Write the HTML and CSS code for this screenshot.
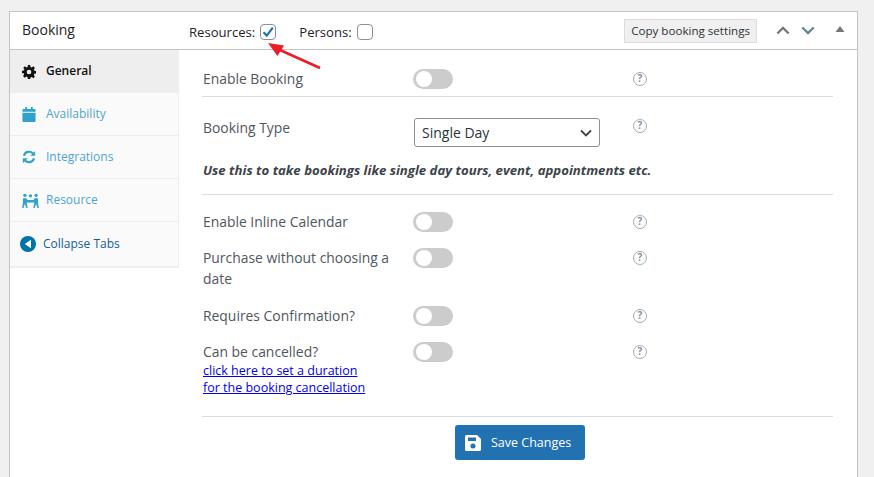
FILE: index.html
```html
<!DOCTYPE html>
<html lang="en">
<head>
<meta charset="utf-8">
<title>Booking</title>
<link rel="stylesheet" href="styles.css">
</head>
<body>
<div class="panel">
  <header class="head">
    <h2 class="title">Booking</h2>
    <label class="opt opt-res">Resources: <span class="check"><svg viewBox="0 0 16 16" width="16" height="16"><path d="M3.500 8.200 6.800 11.600 12.800 3.600" fill="none" stroke="#2271b1" stroke-width="2.200"/></svg></span></label>
    <label class="opt opt-per">Persons: <span class="check"></span></label>
    <span class="copy">Copy booking settings</span>
    <svg class="hbtn hup" viewBox="0 0 16 10" width="14" height="9"><path d="M1.500 8.500 8 2l6.500 6.500" fill="none" stroke="#72777c" stroke-width="2.500"/></svg>
    <svg class="hbtn hdown" viewBox="0 0 16 10" width="14" height="9"><path d="M1.500 1.500 8 8l6.500-6.500" fill="none" stroke="#5f8296" stroke-width="2.500"/></svg>
    <svg class="hbtn htog" viewBox="0 0 10 6" width="10" height="6"><path d="M5 0l4.500 6H.5z" fill="#72777c"/></svg>
  </header>
  <svg class="arrow" viewBox="0 0 64 32" width="64" height="32"><path d="M60 28 20 10" stroke="#ee1c25" stroke-width="2.600" fill="none"/><path d="M8 3 24 5.500 17.500 16z" fill="#ee1c25"/></svg>
  <div class="body">
    <nav class="tabs">
      <a class="tab active"><svg class="ti" viewBox="0 0 24 24" width="14" height="14"><path fill="#111" fill-rule="evenodd" d="M10 0h4l.6 3.300 2 .8L19.400 2.200l2.800 2.800-1.900 2.800.8 2 3.300.6v4l-3.300.6-.8 2 1.900 2.800-2.800 2.800-2.800-1.900-2 .8L14 24h-4l-.6-3.300-2-.8-2.800 1.900-2.800-2.800 1.900-2.800-.8-2L0 14v-4l3.300-.6.8-2L2.200 5 5 2.200l2.800 1.900 2-.8zM12 8a4 4 0 1 0 0 8 4 4 0 0 0 0-8z"/></svg><span>General</span></a>
      <a class="tab"><svg class="ti" viewBox="0 0 14 16" width="13" height="15"><path fill="#2ea2cc" d="M3 0h2v2h4V0h2v2h2a1 1 0 0 1 1 1v2H0V3a1 1 0 0 1 1-1h2zM0 6h14v9a1 1 0 0 1-1 1H1a1 1 0 0 1-1-1z"/></svg><span>Availability</span></a>
      <a class="tab"><svg class="ti" viewBox="0 0 16 16" width="15" height="14"><path fill="none" stroke="#2ea2cc" stroke-width="2.400" d="M2.200 6.500A6 6 0 0 1 12.500 4M13.800 9.500A6 6 0 0 1 3.500 12"/><path fill="#2ea2cc" d="M15 1v5.500H9.500zM1 15V9.500h5.500z"/></svg><span>Integrations</span></a>
      <a class="tab"><svg class="ti ti-w" viewBox="0 0 18 16" width="17" height="15"><g fill="#2ea2cc"><circle cx="3" cy="2.500" r="1.800"/><circle cx="9" cy="3" r="1.800"/><circle cx="15" cy="2.500" r="1.800"/><path d="M1 5.500h3.500L6 7.500h6l1.500-2h3.500v5l1 5.500h-1.500L15 11.500 13.500 16H12l1-5V10H5v1l1 5H4.500L3 11.500 1.500 16H0l1-5.500zM6 8h6v2H6z"/></g></svg><span>Resource</span></a>
      <a class="tab collapse"><svg class="tc" viewBox="0 0 16 16" width="16" height="16"><circle cx="8" cy="8" r="8" fill="#0073aa"/><path d="M11 3.800v8.400L4.800 8z" fill="#fff"/></svg><span>Collapse Tabs</span></a>
    </nav>
    <main class="main">
      <div class="row r-enable"><span class="lab">Enable Booking</span><span class="sw"></span><span class="q">?</span></div>
      <hr class="line">
      <div class="row r-type"><span class="lab">Booking Type</span>
        <span class="sel">Single Day<svg viewBox="0 0 12 8" width="12" height="8"><path d="M1 1.500 6 6.500l5-5" fill="none" stroke="#3c434a" stroke-width="1.800"/></svg></span><span class="q">?</span></div>
      <p class="desc">Use this to take bookings like single day tours, event, appointments etc.</p>
      <hr class="line l2">
      <div class="row r-a"><span class="lab">Enable Inline Calendar</span><span class="sw"></span><span class="q">?</span></div>
      <div class="row r-b"><span class="lab">Purchase without choosing a date</span><span class="sw"></span><span class="q">?</span></div>
      <div class="row r-c"><span class="lab">Requires Confirmation?</span><span class="sw"></span><span class="q">?</span></div>
      <div class="row r-d"><span class="lab">Can be cancelled?<a class="link">click here to set a duration<br>for the booking cancellation</a></span><span class="sw"></span><span class="q">?</span></div>
      <hr class="line l3">
      <div class="save-wrap"><button class="save"><svg viewBox="0 0 16 16" width="16" height="16"><path fill="#fff" fill-rule="evenodd" d="M1.500 0H12l4 4v10.500a1.500 1.500 0 0 1-1.500 1.500h-13A1.500 1.500 0 0 1 0 14.500v-13A1.500 1.500 0 0 1 1.500 0zM3 2.500v3.500h8V2.500zM8 8.500a2.500 2.500 0 1 0 0 5 2.500 2.500 0 0 0 0-5z"/></svg><span>Save Changes</span></button></div>
    </main>
  </div>
</div>
</body>
</html>
```
FILE: styles.css
```css
* { box-sizing: border-box; }
html, body { margin: 0; height: 100%; overflow: hidden; }
body {
  background: #f0f0f1;
  padding: 11px 16px 0 9px;
  font-family: "Open Sans", "Liberation Sans", sans-serif;
  font-size: 14px;
  color: #50575e;
}
.panel {
  position: relative;
  background: #fff;
  border: 1px solid #c3c4c7;
  height: 480px;
}
.head {
  display: flex;
  align-items: center;
  height: 38px;
  border-bottom: 1px solid #c3c4c7;
  padding-left: 12px;
}
.title { margin: 0; font-size: 14px; font-weight: 400; color: #1d2327; width: 167px; position: relative; top: -1px; }
.opt { display: flex; align-items: center; font-size: 13.100px; color: #1d2327; gap: 5px; white-space: nowrap; padding-top: 2px; }
.opt-per { margin-left: 23px; }
.check {
  width: 16px; height: 16px; border: 1px solid #8c8f94; border-radius: 4px;
  display: flex; align-items: center; justify-content: center; background: #fff;
}
.check svg { flex: none; }
.copy {
  margin-left: auto;
  background: #f0f0f1; border: 1px solid #dcdcde;
  color: #2c3338; font-size: 11.600px; line-height: 22px; padding: 0 6px;
  height: 24px; white-space: nowrap;
}
.hbtn { flex: none; }
.hup { margin-left: 19px; }
.hdown { margin-left: 11px; }
.htog { margin: 0 12px 0 20px; position: relative; top: -2px; }
.arrow { position: absolute; left: 250px; top: 28px; }
.body { display: flex; }
.tabs {
  width: 169px; flex: none; background: #fafafa;
  border-right: 1px solid #eee; border-bottom: 2px solid #eee;
  height: 218px;
}
.tab {
  display: flex; align-items: center; height: 43px;
  border-bottom: 1px solid #eee;
  color: #4ea4d0; font-size: 12px; padding-left: 12px;
}
.tab span { position: relative; top: -1px; }
.tab.active { background: #eee; color: #111; font-weight: 600; border-bottom: 0; }
.ti { flex: none; width: 14px; margin-right: 10px; }
.ti-w { width: 17px; margin-right: 7px; }
.tab.collapse { border-bottom: 0; height: 44px; color: #135e96; padding-left: 10px; }
.tc { margin-right: 7px; flex: none; }
.main { width: 678px; padding: 0 24px 0 23px; }
.row { display: flex; align-items: flex-start; position: relative; }
.lab { width: 211px; flex: none; font-size: 13.900px; line-height: 21px; padding-right: 20px; color: #50575e; padding-left: 1px; margin-top: -1px; }
.sw {
  width: 40px; height: 20px; border-radius: 10px; background: #ccc; position: relative; flex: none;
}
.sw::before {
  content: ""; position: absolute; left: 3px; top: 2px; width: 16px; height: 16px;
  border-radius: 50%; background: #fff;
}
.q {
  width: 14px; height: 14px; border: 1.500px solid #a7aaad; border-radius: 50%; flex: none;
  color: #8c8f94; font-size: 10px; font-weight: 700; line-height: 11px; text-align: center;
  margin-left: 180px; margin-top: 3px;
}
.r-enable { padding-top: 19px; height: 46px; }
.line { margin: 0; border: 0; border-top: 1px solid #dcdcde; }
.r-type { padding-top: 21px; }
.r-type .q { margin-left: 33px; margin-top: 1px; }
.sel {
  width: 186px; height: 29px; border: 1px solid #8c8f94; border-radius: 3px; flex: none;
  display: flex; align-items: center; justify-content: space-between;
  padding: 0 7px 0 7px; margin-left: 1px; color: #2c3338; font-size: 14px;
}
.desc { margin: 13px 0 0 1px; font-size: 13.200px; line-height: 20px; font-style: italic; font-weight: 700; color: #3c434a; }
.l2 { margin-top: 14px; }
.r-a { margin-top: 17px; }
.r-b { margin-top: 16px; }
.r-c { margin-top: 17px; }
.r-d { margin-top: 16px; }
.link { display: block; color: #0000ee; text-decoration: underline; font-size: 12.500px; line-height: 17px; }
.l3 { margin-top: 20px; }
.save-wrap { display: flex; justify-content: center; padding: 8px 0 0 5px; }
.save {
  display: flex; align-items: center; gap: 10px; width: 130px; height: 35px;
  background: #2271b1; color: #fff; border: 0; border-radius: 3px; padding: 0 0 0 10px;
  font-family: inherit; font-size: 12.500px; font-weight: 400;
}
```
